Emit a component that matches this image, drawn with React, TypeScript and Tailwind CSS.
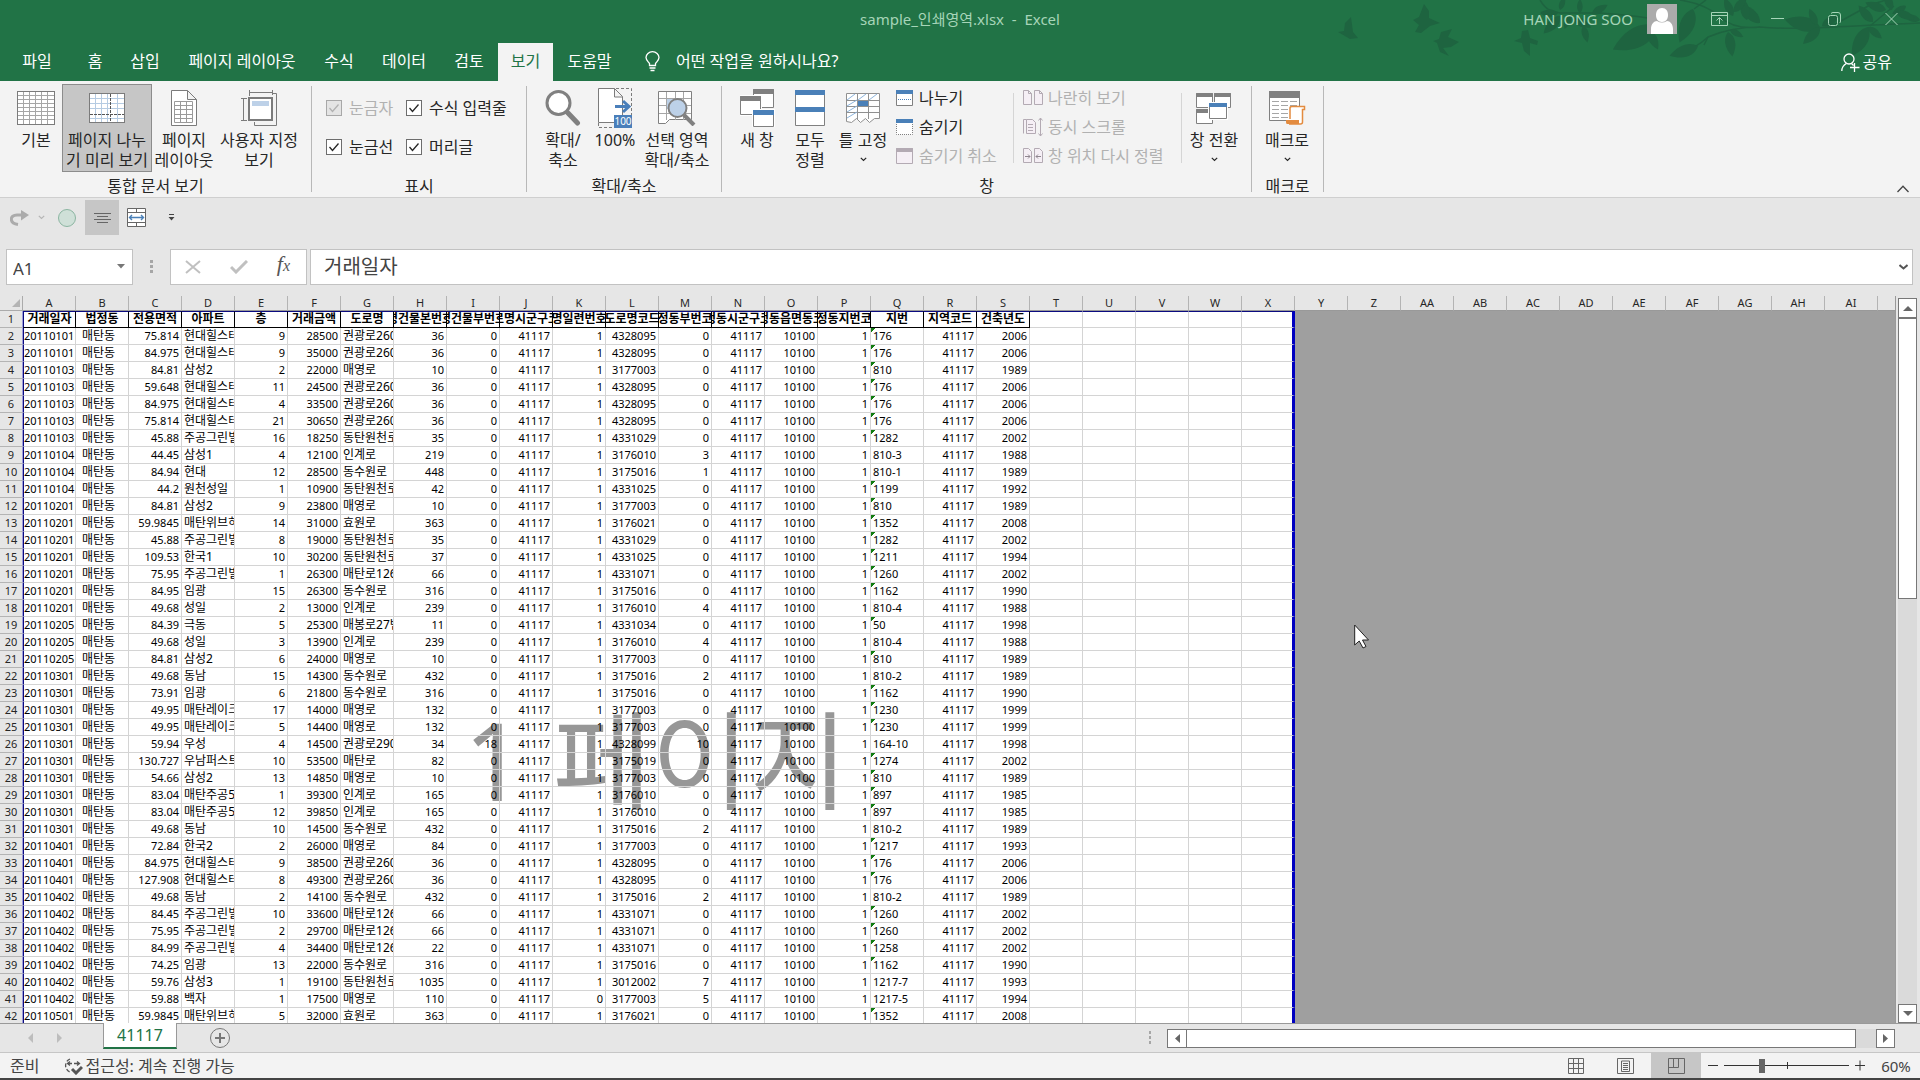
import { useState, type ReactNode } from 'react';
import clsx from 'clsx';

type Row = [string, string, string, number, number, string, number, number, number, number, number, string, number];

const HILL = '현대힐스테이트';
const GREEN = '주공그린빌';
const R260 = '권광로260번길';
const R126 = '매탄로126번길';

// date, area, apartment, floor, price, road, H, I, K, L, M, lot, year
const rows: Row[] = [
  ['20110101', '75.814', HILL, 9, 28500, R260, 36, 0, 1, 4328095, 0, '176', 2006],
  ['20110101', '84.975', HILL, 9, 35000, R260, 36, 0, 1, 4328095, 0, '176', 2006],
  ['20110103', '84.81', '삼성2', 2, 22000, '매영로', 10, 0, 1, 3177003, 0, '810', 1989],
  ['20110103', '59.648', HILL, 11, 24500, R260, 36, 0, 1, 4328095, 0, '176', 2006],
  ['20110103', '84.975', HILL, 4, 33500, R260, 36, 0, 1, 4328095, 0, '176', 2006],
  ['20110103', '75.814', HILL, 21, 30650, R260, 36, 0, 1, 4328095, 0, '176', 2006],
  ['20110103', '45.88', GREEN, 16, 18250, '동탄원천로', 35, 0, 1, 4331029, 0, '1282', 2002],
  ['20110104', '44.45', '삼성1', 4, 12100, '인계로', 219, 0, 1, 3176010, 3, '810-3', 1988],
  ['20110104', '84.94', '현대', 12, 28500, '동수원로', 448, 0, 1, 3175016, 1, '810-1', 1989],
  ['20110104', '44.2', '원천성일', 1, 10900, '동탄원천로', 42, 0, 1, 4331025, 0, '1199', 1992],
  ['20110201', '84.81', '삼성2', 9, 23800, '매영로', 10, 0, 1, 3177003, 0, '810', 1989],
  ['20110201', '59.9845', '매탄위브하늘채', 14, 31000, '효원로', 363, 0, 1, 3176021, 0, '1352', 2008],
  ['20110201', '45.88', GREEN, 8, 19000, '동탄원천로', 35, 0, 1, 4331029, 0, '1282', 2002],
  ['20110201', '109.53', '한국1', 10, 30200, '동탄원천로', 37, 0, 1, 4331025, 0, '1211', 1994],
  ['20110201', '75.95', GREEN, 1, 26300, R126, 66, 0, 1, 4331071, 0, '1260', 2002],
  ['20110201', '84.95', '임광', 15, 26300, '동수원로', 316, 0, 1, 3175016, 0, '1162', 1990],
  ['20110201', '49.68', '성일', 2, 13000, '인계로', 239, 0, 1, 3176010, 4, '810-4', 1988],
  ['20110205', '84.39', '극동', 5, 25300, '매봉로27번길', 11, 0, 1, 4331034, 0, '50', 1998],
  ['20110205', '49.68', '성일', 3, 13900, '인계로', 239, 0, 1, 3176010, 4, '810-4', 1988],
  ['20110205', '84.81', '삼성2', 6, 24000, '매영로', 10, 0, 1, 3177003, 0, '810', 1989],
  ['20110301', '49.68', '동남', 15, 14300, '동수원로', 432, 0, 1, 3175016, 2, '810-2', 1989],
  ['20110301', '73.91', '임광', 6, 21800, '동수원로', 316, 0, 1, 3175016, 0, '1162', 1990],
  ['20110301', '49.95', '매탄레이크파크', 17, 14000, '매영로', 132, 0, 1, 3177003, 0, '1230', 1999],
  ['20110301', '49.95', '매탄레이크파크', 5, 14400, '매영로', 132, 0, 1, 3177003, 0, '1230', 1999],
  ['20110301', '59.94', '우성', 4, 14500, '권광로290번길', 34, 18, 1, 4328099, 10, '164-10', 1998],
  ['20110301', '130.727', '우남퍼스트빌', 10, 53500, '매탄로', 82, 0, 1, 3175019, 0, '1274', 2002],
  ['20110301', '54.66', '삼성2', 13, 14850, '매영로', 10, 0, 1, 3177003, 0, '810', 1989],
  ['20110301', '83.04', '매탄주공5', 1, 39300, '인계로', 165, 0, 1, 3176010, 0, '897', 1985],
  ['20110301', '83.04', '매탄주공5', 12, 39850, '인계로', 165, 0, 1, 3176010, 0, '897', 1985],
  ['20110301', '49.68', '동남', 10, 14500, '동수원로', 432, 0, 1, 3175016, 2, '810-2', 1989],
  ['20110401', '72.84', '한국2', 2, 26000, '매영로', 84, 0, 1, 3177003, 0, '1217', 1993],
  ['20110401', '84.975', HILL, 9, 38500, R260, 36, 0, 1, 4328095, 0, '176', 2006],
  ['20110401', '127.908', HILL, 8, 49300, R260, 36, 0, 1, 4328095, 0, '176', 2006],
  ['20110402', '49.68', '동남', 2, 14100, '동수원로', 432, 0, 1, 3175016, 2, '810-2', 1989],
  ['20110402', '84.45', GREEN, 10, 33600, R126, 66, 0, 1, 4331071, 0, '1260', 2002],
  ['20110402', '75.95', GREEN, 2, 29700, R126, 66, 0, 1, 4331071, 0, '1260', 2002],
  ['20110402', '84.99', GREEN, 4, 34400, R126, 22, 0, 1, 4331071, 0, '1258', 2002],
  ['20110402', '74.25', '임광', 13, 22000, '동수원로', 316, 0, 1, 3175016, 0, '1162', 1990],
  ['20110402', '59.76', '삼성3', 1, 19100, '동탄원천로', 1035, 0, 1, 3012002, 7, '1217-7', 1993],
  ['20110402', '59.88', '백자', 1, 17500, '매영로', 110, 0, 0, 3177003, 5, '1217-5', 1994],
  ['20110501', '59.9845', '매탄위브하늘채', 5, 32000, '효원로', 363, 0, 1, 3176021, 0, '1352', 2008],
];

const fields = [
  '거래일자', '법정동', '전용면적', '아파트', '층', '거래금액', '도로명',
  '도로명건물본번호코드', '도로명건물부번호코드', '도로명시군구코드', '도로명일련번호코드', '도로명코드',
  '법정동부번코드', '법정동시군구코드', '법정동읍면동코드', '법정동지번코드', '지번', '지역코드', '건축년도',
];

const columns = [...'ABCDEFGHIJKLMNOPQRSTUVWXYZ', 'AA', 'AB', 'AC', 'AD', 'AE', 'AF', 'AG', 'AH', 'AI'];
const blankColumns = ['T', 'U', 'V', 'W', 'X'];

const tabs = [
  { name: '파일', width: 'w-[74px]' },
  { name: '홈', width: 'w-[42px]' },
  { name: '삽입', width: 'w-[58px]' },
  { name: '페이지 레이아웃', width: 'w-[136px]' },
  { name: '수식', width: 'w-[58px]' },
  { name: '데이터', width: 'w-[72px]' },
  { name: '검토', width: 'w-[58px]' },
  { name: '보기', width: 'w-[55px]' },
  { name: '도움말', width: 'w-[73px]' },
];

// x, y, length, angle
const leaves = [
  [228, 13, 18, 180], [230, 10, 14, 290], [230, 16, 24, 133], [240, 14, 16, 110], [250, 13, 14, 270],
  [253, 26, 17, 75], [243, 19, 20, 25], [262, 14, 18, 330], [327, 26, 50, 152], [318, 30, 22, 63],
  [363, 9, 36, 112], [368, 46, 30, 161], [398, 32, 25, 80], [400, 30, 15, 28], [430, 23, 26, 225],
  [417, 20, 22, 260], [403, 16, 20, 245], [404, 12, 20, 310], [490, 27, 36, 192], [490, 27, 24, 135],
  [487, 25, 18, 245], [492, 26, 20, 330], [538, 27, 33, 119], [538, 27, 18, 40], [543, 22, 22, 229],
  [556, 10, 22, 200], [562, 10, 20, 250], [576, 6, 16, 150], [590, 20, 18, 195], [566, 12, 20, 20],
];

function Foliage() {
  return (
    <svg className="pointer-events-none absolute right-0 top-0" width="590" height="60" fill="#1e6440" aria-hidden="true">
      <path d="M21 17l2 15 5 6-8 1-12-7 6-1 1-8z" />
      <path d="M94 4l5 7v7l11 5-10 3-9 7-6-1 4-7-6-5 6-3z" />
      <path d="M122 29l-4 8 11 5-8 5-8 1 6 8-9-4-3-9-4-2 6-2 2-7z" />
      <path d="M198 30l2 8 8 3-1 4-7-2v13l-6-5-2-8-8-2 7-3 1-7z" />
      <g fill="none" stroke="#1e6440" strokeWidth="1.500">
        <path d="M210 0c6 10 12 12 20 13h40q28 2 48 5M350 0q26 4 40 17t40 10M352 52q14-4 26-15c14-6 32-10 52-10c40 4 100-2 160-4" />
        <path d="M364 9l12-9M378 37l-4 8M500 27l40-22 16-5M540 26l24-20" />
      </g>
      {leaves.map(([x, y, len, angle], i) => (
        <path key={i} transform={`translate(${x} ${y}) rotate(${angle}) scale(${len / 30})`} d="M0 0C6-8 18-9 30 0C18 8 6 7 0 0z" />
      ))}
    </svg>
  );
}

function Chevron({ className }: { className?: string }) {
  return (
    <svg className={className} width="7" height="5" fill="none" stroke="currentColor" strokeWidth="1.200">
      <path d="M.8.8l2.7 2.7L6.2.8" />
    </svg>
  );
}

/* Ribbon icons */
const NormalIcon = () => (
  <svg width="38" height="34" fill="#fff" stroke="#7b7b7b">
    <rect x=".5" y=".5" width="37" height="33" />
    <path stroke="#a6a6a6" d="M6.500 1v32M12.500 1v32M18.500 1v32M24.500 1v32M30.500 1v32M1 4.500h36M1 8.500h36M1 12.500h36M1 16.500h36M1 20.500h36M1 24.500h36M1 28.500h36" />
  </svg>
);

const BreakIcon = () => (
  <svg width="36" height="30" fill="#fff" stroke="#7b7b7b">
    <rect x=".5" y=".5" width="35" height="29" />
    <path stroke="#b5cbe2" d="M6.500 1v28M12.500 1v28M18.500 1v28M28.500 1v28M1 5.500h34M1 10.500h34M1 15.500h34M1 25.500h34" />
    <path stroke="#555" strokeDasharray="3 1" d="M21.500 1v28M1 21.500h34" />
  </svg>
);

const LayoutIcon = () => (
  <svg width="26" height="36" fill="#fff" stroke="#7b7b7b">
    <path d="M.5.500h16l9 9v26H.500zM16.500.500v9h9" />
    <path stroke="#9a9a9a" d="M3.500 11.500h18v21h-18zM3.500 15.500h18M3.500 19.500h18M3.500 24.500h18M3.500 28.500h18M9.500 11.500v21M15.500 11.500v21" />
  </svg>
);

const CustomViewIcon = () => (
  <svg width="37" height="36" fill="none" stroke="#7b7b7b">
    <path d="M8.500 0v6M31.500 0v5M8 2.500h24M0 8.500h6M0 30.500h6M2.500 8v22M32 3.500h3.500v32h-22V32" />
    <rect x="8" y="8" width="23" height="22" fill="#fff" strokeWidth="2" />
    <path fill="#bdd1e8" stroke="none" d="M11 11h17v5H11z" />
  </svg>
);

const ZoomIcon = () => (
  <svg width="36" height="36" fill="#fff" stroke="#808080">
    <circle cx="13.500" cy="13" r="11.500" strokeWidth="3" />
    <path strokeWidth="5" strokeLinecap="round" d="M23 23l9.500 10" />
  </svg>
);

const HundredIcon = () => (
  <svg width="34" height="40" fill="none" stroke="#7b7b7b">
    <path strokeDasharray="3 2" d="M18 .5h15.500V39M.5 35v4.500H16" />
    <path fill="#fff" d="M.5.500h16l8 8v26H.500zM16.500.500v8.500h8" />
    <path stroke="#4a7fba" strokeWidth="3" d="M17 18.500h13M25 13l6 5.500-6 5.500" />
    <path fill="#4a7fba" stroke="none" d="M16 27h18v13H16z" />
    <text x="25" y="37" fill="#fff" stroke="none" fontSize="10" fontFamily="Noto Sans" textAnchor="middle">100</text>
  </svg>
);

const ZoomSelectionIcon = () => (
  <svg width="38" height="35" fill="#fff" stroke="#808080">
    <path d="M.5.500h33v28h-22l-4 4H.500z" />
    <path fill="none" stroke="#a6a6a6" d="M8.500 1v28M17.500 1v28M25.500 1v28M1 7.500h32M1 14.500h32M1 22.500h32" />
    <path fill="#bdd1e8" stroke="none" d="M9 8h10v10H9z" />
    <circle cx="19.500" cy="17" r="9" fill="#bdd1e8" strokeWidth="2" />
    <path strokeWidth="4" d="M26 24l10 10" />
  </svg>
);

const NewWindowIcon = () => (
  <svg width="35" height="38" fill="#fff" stroke="#808080">
    <path d="M13.500.500h20v18h-20z" />
    <path stroke="#fff" strokeWidth="3" d="M.5 7.500h20v18H.500z" />
    <path d="M.5 7.500h20v18H.500z" />
    <path fill="#808080" d="M13.500.500h20v4h-20zM.5 7.500h20v4H.500z" />
    <path stroke="#fff" strokeWidth="3" d="M13.500 21.500h20v16h-20z" />
    <path d="M13.500 21.500h20v16h-20z" />
    <path fill="#4a80b8" stroke="none" d="M13 21h21v5H13z" />
  </svg>
);

const ArrangeIcon = () => (
  <svg width="30" height="36" fill="#fff" stroke="#808080">
    <path d="M.5.500h29v35H.500z" />
    <path fill="#4a80b8" stroke="none" d="M0 0h30v5H0zM0 17h30v5H0z" />
  </svg>
);

const FreezeIcon = () => (
  <svg width="35" height="30" fill="#fff" stroke="#909090">
    <path d="M.5.500h33v25h-5l-5 4-4-4-5 4-4-4-5 4-5-1z" />
    <path fill="none" d="M11.500 1v25M22.500 1v25M1 7.500h33M1 13.500h33M1 19.500h33" />
    <path fill="none" stroke="#8db4dc" d="M1 7l8-6M12 7l8-6M23 7l8-6M1 13l10-6M1 19l10-6M1 25l10-6" />
    <path fill="#4a80b8" stroke="none" d="M12 8h10v5H12z" />
  </svg>
);

const SwitchIcon = () => (
  <svg width="36" height="31" fill="#fff" stroke="#808080">
    <path d="M.5.500h16v14H.500zM18.500.500h16v14h-16zM.5 16.500h16v14H.500z" />
    <path fill="#808080" d="M.5.500h16v3H.500zM18.500.500h16v3h-16zM.5 16.500h16v3H.500z" />
    <path stroke="#fff" strokeWidth="3" d="M13.500 10.500h17v15h-17z" />
    <path d="M13.500 10.500h17v15h-17z" />
    <path fill="#4a80b8" stroke="none" d="M13 10h18v4H13z" />
  </svg>
);

const MacroIcon = () => (
  <svg width="37" height="34" fill="#fff" stroke="#808080">
    <path d="M.5.500h30v29H.500z" />
    <path fill="#808080" stroke="none" d="M0 0h31v7H0z" />
    <path stroke="#a6a6a6" strokeDasharray="7 2" d="M3 10.500h26M3 14.500h26M3 18.500h16M3 22.500h16M3 26.500h16" />
    <path stroke="#e38b3f" strokeWidth="1.500" d="M21 28V17q0-1.500 2-1.500h12.500v3h-2V31q0 2-2 2H20" />
    <path fill="#e38b3f" stroke="none" d="M17 29h13v4H18q-1 0-1-2z" />
  </svg>
);

const SplitIcon = () => (
  <svg width="17" height="16" fill="#fff" stroke="#808080">
    <path d="M.5.500h16v15H.500z" />
    <path fill="#4a80b8" stroke="none" d="M0 0h17v4H0z" />
    <path strokeDasharray="1 1" stroke="#4a80b8" d="M2 9.500h13" />
  </svg>
);

const HideIcon = () => (
  <svg width="17" height="16" fill="#fff" stroke="#808080">
    <path strokeDasharray="1 1" d="M.5 3v12.500h16V3" />
    <path fill="#4a80b8" stroke="none" d="M0 0h17v4H0z" />
  </svg>
);

const UnhideIcon = () => (
  <svg width="17" height="16" fill="#f5eff5" stroke="#b3aab3">
    <path d="M.5.500h16v15H.500z" />
    <path fill="#b3aab3" d="M.5.500h16v3H.500z" />
  </svg>
);

const SideBySideIcon = () => (
  <svg width="20" height="15" fill="#f5eff5" stroke="#b3aab3">
    <path d="M.5.500h5l3 3v11h-8zM11.500.500h5l3 3v11h-8zM5.500.500v3h3M16.500.500v3h3" />
  </svg>
);

const SyncIcon = () => (
  <svg width="20" height="20" fill="#f5eff5" stroke="#b3aab3">
    <path d="M.5 16.500v-14h3M3.500 2.500h6l3 3v11h-9zM5 7.500h5M5 10.500h5M5 13.500h5" />
    <path fill="none" d="M17.500 1v18M15.500 3.500l2-2.500 2 2.500M15.500 16.500l2 2.500 2-2.500" />
  </svg>
);

const ResetIcon = () => (
  <svg width="20" height="15" fill="#f5eff5" stroke="#b3aab3">
    <path d="M.5.500h5l3 3v11h-8zM11.500.500h5l3 3v11h-8z" />
    <path fill="none" stroke="#8f868f" d="M2 8.500h5M5 6.500l2 2-2 2M18 8.500h-5M15 6.500l-2 2 2 2" />
  </svg>
);

interface BigButtonProps {
  icon: ReactNode;
  lines: string[];
  width: string;
  active?: boolean;
  menu?: boolean;
}

function BigButton({ icon, lines, width, active, menu }: BigButtonProps) {
  return (
    <button
      className={clsx(
        'flex h-[88px] shrink-0 flex-col items-center whitespace-nowrap border pt-[3px] leading-5',
        width,
        active ? 'border-[#8c8c8c] bg-[#c6c6c6]' : 'border-transparent',
      )}
    >
      <span className="mb-0.5 flex h-10 items-center">{icon}</span>
      {lines.map((line) => (
        <span key={line}>{line}</span>
      ))}
      {menu && <Chevron className="mt-[7px]" />}
    </button>
  );
}

function SmallButton({ icon, label, disabled }: { icon: ReactNode; label: string; disabled?: boolean }) {
  return (
    <button disabled={disabled} className="flex h-[29px] items-center whitespace-nowrap pb-[2px] disabled:text-[#b1b1b1]">
      <span className="mr-[5px] flex min-w-[18px]">{icon}</span>
      {label}
    </button>
  );
}

function CheckOption({ label, disabled }: { label: string; disabled?: boolean }) {
  return (
    <label className={clsx('flex items-center gap-[7px] whitespace-nowrap', disabled && 'text-[#b1b1b1]')}>
      <span className="grid">
        <input
          type="checkbox"
          defaultChecked
          disabled={disabled}
          className="peer col-start-1 row-start-1 size-4 appearance-none border border-[#6d6d6d] bg-white disabled:border-[#a8a8a8] disabled:bg-[#e4e4e4]"
        />
        <svg className="pointer-events-none invisible col-start-1 row-start-1 peer-checked:visible" width="16" height="16" fill="none" stroke="currentColor" strokeWidth="1.300">
          <path d="M3.500 8l3 3.500L12.500 4.500" />
        </svg>
      </span>
      {label}
    </label>
  );
}

interface GroupProps {
  title: string;
  width: string;
  pad?: string;
  children: ReactNode;
}

function Group({ title, width, pad, children }: GroupProps) {
  return (
    <>
      <section className={clsx('flex shrink-0 flex-col pt-[3px]', width)}>
        <div className={clsx('flex h-[88px]', pad)}>{children}</div>
        <h2 className="mt-1 text-center leading-5">{title}</h2>
      </section>
      <div className="mt-[5px] h-[106px] w-px shrink-0 bg-[#b8b8b8]" />
    </>
  );
}

function TitleBar() {
  return (
    <header className="relative bg-[#217346] text-white">
      <Foliage />
      <div className="relative flex h-[43px] items-start justify-end text-[15px] text-[#a6d5b8]">
        <h1 className="absolute inset-x-0 top-[9px] text-center leading-5">sample_인쇄영역.xlsx&nbsp; -&nbsp; Excel</h1>
        <span className="mt-[9px] leading-5">HAN JONG SOO</span>
        <button aria-label="계정" className="ml-3.5 mt-1">
          <svg width="30" height="30">
            <path fill="#ababab" d="M0 0h30v30H0z" />
            <path fill="#fff" d="M15 4c4 0 6 3 6 7s-2 7-6 7-6-3-6-7 2-7 6-7zM4 30V25c0-5 3-8 6-8q5 3 10 0c3 0 6 3 6 8v5z" />
          </svg>
        </button>
        <button aria-label="리본 메뉴 표시 옵션" className="ml-[34px] mt-[12px]">
          <svg width="17" height="14" fill="none" stroke="currentColor">
            <path d="M.5.500h16v13H.500zM.5 3.500h16M8.500 12V6M5.500 8.500l3-3 3 3" />
          </svg>
        </button>
        <button aria-label="최소화" className="ml-[43px] mt-[12px]">
          <svg width="13" height="14" stroke="currentColor"><path d="M0 6.500h13" /></svg>
        </button>
        <button aria-label="이전 크기로 복원" className="ml-[44px] mt-[12px]">
          <svg width="13" height="14" fill="none" stroke="currentColor">
            <rect x=".5" y="3.500" width="9" height="10" rx="2" />
            <path d="M3 1.500q1-1 2-1h5q2.500 0 2.500 2.500v6q0 1.500-1 2" />
          </svg>
        </button>
        <button aria-label="닫기" className="ml-[44px] mr-[22px] mt-[12px]">
          <svg width="13" height="14" stroke="currentColor"><path d="M.5 1l12 12M12.500 1l-12 12" /></svg>
        </button>
      </div>
      <nav className="relative flex h-[38px] items-stretch">
        {tabs.map((tab) => (
          <button
            key={tab.name}
            className={clsx('shrink-0 whitespace-nowrap pb-[2px]', tab.width, tab.name === '보기' && 'bg-[#f3f3f3] text-[#217346]')}
          >
            {tab.name}
          </button>
        ))}
        <button className="ml-[19px] flex items-center whitespace-nowrap pb-[2px]">
          <svg className="mr-4" width="15" height="21" fill="none" stroke="currentColor" strokeWidth="1.300">
            <path d="M4.500 14.500v-2C3 10.500 1 9 1 6.500a6.500 5.800 0 0113 0C14 9 12 10.500 10.500 12.500v2zM4.500 17h6M5.500 19.500h4" />
          </svg>
          어떤 작업을 원하시나요?
        </button>
        <button className="ml-auto mr-[28px] flex items-center">
          <svg className="mr-[3px]" width="19" height="19" fill="none" stroke="currentColor" strokeWidth="1.300">
            <circle cx="8" cy="6" r="5" />
            <path d="M.8 18c0-4 2-6 4.500-7.500M10.500 10.500l2 2M13.500 10v9M9 14.500h9.500" />
          </svg>
          공유
        </button>
      </nav>
    </header>
  );
}

function Ribbon() {
  return (
    <div className="flex h-[117px] border-b border-[#cfcfcf] bg-[#f3f3f3] text-[#262626]">
      <Group title="통합 문서 보기" width="w-[311px]" pad="pl-[10px]">
        <BigButton icon={<NormalIcon />} lines={['기본']} width="w-[52px]" />
        <BigButton icon={<BreakIcon />} lines={['페이지 나누', '기 미리 보기']} width="w-[90px]" active />
        <BigButton icon={<LayoutIcon />} lines={['페이지', '레이아웃']} width="w-[64px]" />
        <BigButton icon={<CustomViewIcon />} lines={['사용자 지정', '보기']} width="w-[86px]" />
      </Group>
      <Group title="표시" width="w-[214px]">
        <div className="grid grid-cols-[80px_auto] grid-rows-[39px_39px] pl-[14px] pt-1">
          <CheckOption label="눈금자" disabled />
          <CheckOption label="수식 입력줄" />
          <CheckOption label="눈금선" />
          <CheckOption label="머리글" />
        </div>
      </Group>
      <Group title="확대/축소" width="w-[194px]" pad="pl-[11px]">
        <BigButton icon={<ZoomIcon />} lines={['확대/', '축소']} width="w-[50px]" />
        <BigButton icon={<HundredIcon />} lines={['100%']} width="w-[54px]" />
        <BigButton icon={<ZoomSelectionIcon />} lines={['선택 영역', '확대/축소']} width="w-[70px]" />
      </Group>
      <Group title="창" width="w-[529px]" pad="pl-[9px]">
        <BigButton icon={<NewWindowIcon />} lines={['새 창']} width="w-[52px]" />
        <BigButton icon={<ArrangeIcon />} lines={['모두', '정렬']} width="w-[54px]" />
        <BigButton icon={<FreezeIcon />} lines={['틀 고정']} width="w-[52px]" menu />
        <div className="ml-[7px] w-[117px]">
          <SmallButton icon={<SplitIcon />} label="나누기" />
          <SmallButton icon={<HideIcon />} label="숨기기" />
          <SmallButton icon={<UnhideIcon />} label="숨기기 취소" disabled />
        </div>
        <div className="my-[9px] w-px bg-[#d5d5d5]" />
        <div className="w-[167px] pl-[9px]">
          <SmallButton icon={<SideBySideIcon />} label="나란히 보기" disabled />
          <SmallButton icon={<SyncIcon />} label="동시 스크롤" disabled />
          <SmallButton icon={<ResetIcon />} label="창 위치 다시 정렬" disabled />
        </div>
        <div className="my-[9px] w-px bg-[#d5d5d5]" />
        <BigButton icon={<SwitchIcon />} lines={['창 전환']} width="w-[64px]" menu />
      </Group>
      <Group title="매크로" width="w-[71px]" pad="pl-[3px]">
        <BigButton icon={<MacroIcon />} lines={['매크로']} width="w-[64px]" menu />
      </Group>
      <button aria-label="리본 메뉴 축소" className="ml-auto mr-[11px] self-end pb-1">
        <svg width="12" height="8" fill="none" stroke="#444" strokeWidth="1.300"><path d="M.5 7L6 1.200 11.500 7" /></svg>
      </button>
    </div>
  );
}

function QuickAccess() {
  return (
    <div className="flex h-[39px] items-center pl-[10px]">
      <button aria-label="다시 실행">
        <svg width="19" height="16" fill="none" stroke="#ababab" strokeWidth="3">
          <path d="M8 14.500C-1 13-.5 5 7 5h8" />
          <path fill="#ababab" stroke="none" d="M11 0l8 5-8 5.500z" />
        </svg>
      </button>
      <Chevron className="ml-[9px] text-[#b5b5b5]" />
      <button aria-label="녹음" className="ml-[13px] size-[18px] rounded-full border border-[#8bb5a1] bg-[#cfe0d8]" />
      <button aria-label="가운데 맞춤" className="ml-[9px] flex h-[35px] w-[34px] items-center justify-center bg-[#c6c6c6]">
        <svg width="17" height="12" stroke="#666"><path d="M0 1.500h17M3 4.500h11M0 7.500h17M3 10.500h11" /></svg>
      </button>
      <button aria-label="병합하고 가운데 맞춤" className="ml-2">
        <svg width="19" height="19" fill="#fff" stroke="#666">
          <path d="M.5.500h18v18H.500zM.5 4.500h18M.5 14.500h18M9.500.500v4M9.500 14.500v4" />
          <path fill="none" stroke="#4a80b8" strokeWidth="1.400" d="M2.500 9.500h14M5 7L2.500 9.500 5 12M14 7l2.500 2.500L14 12" />
        </svg>
      </button>
      <button aria-label="빠른 실행 도구 모음 사용자 지정" className="ml-[22px]">
        <svg width="7" height="7" fill="#444"><path d="M1 0h5v1H1zM.5 3h6l-3 3.500z" /></svg>
      </button>
    </div>
  );
}

function FormulaBar() {
  return (
    <div className="flex items-stretch pb-[11px] pl-1.5 pr-[7px] pt-3">
      <div className="flex h-9 w-[127px] items-center border border-[#c2c2c2] bg-white">
        <input aria-label="이름 상자" defaultValue="A1" className="w-[110px] pl-1.5 pt-[3px] text-[17px] text-[#444] outline-none" />
        <button aria-label="이름 목록" className="pb-[2px]"><svg width="8" height="5" fill="#777"><path d="M0 0h8L4 4.500z" /></svg></button>
      </div>
      <svg className="mx-[17px] self-center" width="3" height="14" fill="#a6a6a6"><path d="M0 0h3v3H0zM0 5h3v3H0zM0 10h3v3H0z" /></svg>
      <div className="flex h-9 w-[137px] items-center justify-between border border-[#c2c2c2] bg-white pl-3.5 pr-4">
        <button aria-label="취소"><svg width="16" height="14" stroke="#c0c0c0" strokeWidth="2"><path d="M1 1l14 12M15 1L1 13" /></svg></button>
        <button aria-label="입력"><svg width="18" height="14" fill="none" stroke="#c0c0c0" strokeWidth="3"><path d="M1 7l5 5L17 1" /></svg></button>
        <button aria-label="함수 삽입" className="pb-1 font-['Liberation_Serif',serif] text-[22px] italic leading-6 text-[#555]">
          f<span className="text-base">x</span>
        </button>
      </div>
      <div className="ml-[3px] flex h-9 flex-1 items-center border border-[#c2c2c2] bg-white pr-1">
        <input aria-label="수식 입력줄" defaultValue="거래일자" className="min-w-0 flex-1 pb-px pl-[13px] text-xl leading-6 text-[#444] outline-none" />
        <button aria-label="수식 입력줄 확장" className="pb-px"><svg width="9" height="6" fill="none" stroke="#555" strokeWidth="2"><path d="M.5 1l4 3.500 4-3.500" /></svg></button>
      </div>
    </div>
  );
}

const cell = 'h-[17px] overflow-hidden whitespace-nowrap border-b border-r border-[#d4d4d4] p-0 leading-4';
const numCell = clsx(cell, 'pr-[2px] text-right');
const textCell = clsx(cell, 'pl-[2px] text-xs leading-4');

function RowNumber({ n }: { n: number }) {
  return <th className="h-[17px] border-b border-r border-b-[#b4b4b4] border-r-[#9d9dd8] bg-[#e6e6e6] p-0 font-normal leading-4 text-[#262626]">{n}</th>;
}

function DataRow({ row, n }: { row: Row; n: number }) {
  const [date, area, apt, floor, price, road, h, i, k, l, m, lot, year] = row;
  return (
    <tr>
      <RowNumber n={n} />
      <td className={clsx(numCell, 'border-l border-l-[#0b0b80]')}>{date}</td>
      <td className={clsx(cell, 'pl-[6px] text-xs leading-4')}>매탄동</td>
      <td className={numCell}>{area}</td>
      <td className={textCell}>{apt}</td>
      <td className={numCell}>{floor}</td>
      <td className={numCell}>{price}</td>
      <td className={textCell}>{road}</td>
      <td className={numCell}>{h}</td>
      <td className={numCell}>{i}</td>
      <td className={numCell}>41117</td>
      <td className={numCell}>{k}</td>
      <td className={numCell}>{l}</td>
      <td className={numCell}>{m}</td>
      <td className={numCell}>41117</td>
      <td className={numCell}>10100</td>
      <td className={numCell}>1</td>
      <td className={clsx(cell, 'pl-[2px]', !lot.includes('-') && 'bg-[linear-gradient(135deg,#107c10_3px,transparent_3px)]')}>{lot}</td>
      <td className={numCell}>41117</td>
      <td className={numCell}>{year}</td>
      {blankColumns.map((c) => (
        <td key={c} className={clsx(cell, c === 'X' && 'border-r-[3px] border-r-[#0000c0]')} />
      ))}
    </tr>
  );
}

function Sheet() {
  return (
    <div className="relative min-w-0 flex-1 overflow-hidden border-r border-[#999] bg-white">
      <div className="absolute inset-y-0 left-[23px] flex w-[1266px] items-center justify-center pt-[200px] text-[107px] leading-none text-[#979797]">
        1 페이지
      </div>
      <table className="relative w-full table-fixed border-separate border-spacing-0 text-[11px] text-black">
        <colgroup>
          <col className="w-[23px]" />
          {columns.map((c) => (
            <col key={c} className="w-[53px]" />
          ))}
          <col />
        </colgroup>
        <thead className="bg-[#e6e6e6] text-[#262626]">
          <tr>
            <th className="h-[15px] border-b border-r border-[#ababab] p-0">
              <svg className="ml-3" width="8" height="8" fill="#b4b4b4"><path d="M8 0v8H0z" /></svg>
            </th>
            {columns.map((c) => (
              <th key={c} className="h-[15px] border-b border-r border-b-[#999] border-r-[#b4b4b4] p-0 font-normal leading-[14px]">{c}</th>
            ))}
            <th className="border-b border-[#999] p-0" />
          </tr>
        </thead>
        <tbody>
          <tr>
            <RowNumber n={1} />
            {fields.map((f, i) => (
              <td
                key={f}
                className={clsx(
                  'h-[17px] overflow-hidden border-b border-r border-t border-b-black border-r-black border-t-[#0b0b80] p-0 text-xs font-bold leading-[14px]',
                  i === 0 && 'border-l border-l-[#0b0b80]',
                )}
              >
                <div className="flex h-[15px] justify-center overflow-hidden whitespace-nowrap"><span>{f}</span></div>
              </td>
            ))}
            {blankColumns.map((c) => (
              <td key={c} className={clsx(cell, 'border-t border-t-[#0b0b80]', c === 'X' && 'border-r-[3px] border-r-[#0000c0]')} />
            ))}
            <td rowSpan={rows.length + 1} colSpan={12} className="bg-[#9f9f9f] p-0" />
          </tr>
          {rows.map((row, i) => (
            <DataRow key={i} row={row} n={i + 2} />
          ))}
        </tbody>
      </table>
    </div>
  );
}

const scrollButton = 'flex items-center justify-center border border-[#777] bg-white';

function VerticalScroll() {
  return (
    <div className="flex w-6 flex-col pl-[2px] pr-[3px] pt-[2px]">
      <button aria-label="위로" className={clsx(scrollButton, 'h-5')}>
        <svg width="10" height="5" fill="#666"><path d="M5 0l5 5H0z" /></svg>
      </button>
      <div className="min-h-0 flex-1 bg-[#dadada]">
        <div className="h-[41%] border border-[#777] bg-white" />
      </div>
      <button aria-label="아래로" className={clsx(scrollButton, 'h-[19px]')}>
        <svg width="10" height="5" fill="#666"><path d="M0 0h10L5 5z" /></svg>
      </button>
    </div>
  );
}

function SheetBar() {
  return (
    <div className="flex h-[30px] border-b border-t border-b-[#c6c6c6] border-t-[#999] pr-[25px]">
      <button aria-label="이전 시트" className="ml-7"><svg width="5" height="10" fill="#bdbdbd"><path d="M5 0v10L0 5z" /></svg></button>
      <button aria-label="다음 시트" className="ml-6"><svg width="5" height="10" fill="#bdbdbd"><path d="M0 0v10l5-5z" /></svg></button>
      <button className="relative -mt-px ml-[41px] h-[26px] w-[74px] border-x border-b-2 border-x-[#999] border-b-[#217346] bg-white text-base leading-6 text-[#217346]">
        41117
      </button>
      <button aria-label="새 시트" className="ml-[33px]">
        <svg width="20" height="20" fill="none" stroke="#777">
          <circle cx="10" cy="10" r="9.500" />
          <path strokeWidth="2" d="M10 5v10M5 10h10" />
        </svg>
      </button>
      <svg className="ml-auto mr-4 self-center" width="2" height="14" fill="#a6a6a6"><path d="M0 0h2v3H0zM0 5h2v3H0zM0 10h2v3H0z" /></svg>
      <div className="flex h-[19px] w-[728px] self-center bg-[#dadada]">
        <button aria-label="왼쪽으로" className={clsx(scrollButton, 'w-5')}>
          <svg width="5" height="9" fill="#666"><path d="M5 0v9L0 4.500z" /></svg>
        </button>
        <div className="flex-1 pr-5">
          <div className="-ml-px h-full border border-[#777] bg-white" />
        </div>
        <button aria-label="오른쪽으로" className={clsx(scrollButton, 'w-[19px]')}>
          <svg width="5" height="9" fill="#666"><path d="M0 0v9l5-4.500z" /></svg>
        </button>
      </div>
    </div>
  );
}

function StatusBar() {
  const [zoom, setZoom] = useState(29);

  return (
    <footer className="flex h-[27px] items-center whitespace-nowrap border-b-2 border-[#444] bg-[#f3f3f3] pl-[10px] pr-2 text-[#444]">
      <span>준비</span>
      <button className="ml-6 flex items-center">
        <svg className="mr-[2px]" width="20" height="18" fill="none" stroke="#555" strokeWidth="1.300">
          <path strokeDasharray="4 2" d="M7 2a7 7 0 000 13" />
          <path d="M5 6.500h4M7 4.500l-2.500 2L7 8.500M11 6.500h5M14 4.500l2.500 2-2.500 2" />
          <path strokeWidth="3" d="M9 12l4 4 6-6" />
        </svg>
        접근성: 계속 진행 가능
      </button>
      <button aria-label="기본" className="ml-auto mr-[33px]">
        <svg width="16" height="16" fill="none" stroke="#666"><path d="M.5.500h15v15H.500zM5.500.500v15M10.500.500v15M.5 5.500h15M.5 10.500h15" /></svg>
      </button>
      <button aria-label="페이지 레이아웃" className="mr-[17px]">
        <svg width="17" height="16" fill="none" stroke="#666"><path d="M.5.500h16v15H.500zM4.500 3h8v10.500h-8zM6 5.500h5M6 7.500h5M6 9.500h5M6 11.500h5" /></svg>
      </button>
      <button aria-label="페이지 나누기 미리 보기" className="flex h-full w-[50px] items-center justify-center bg-[#c6c6c6]">
        <svg width="17" height="16" fill="none" stroke="#666"><path d="M.5.500h16v15H.500zM5.500.500v9M10.500.500v9M.5 9.500h10" /></svg>
      </button>
      <button aria-label="축소" className="ml-[7px]"><svg width="10" height="11" stroke="#333"><path d="M0 5.500h10" /></svg></button>
      <div className="relative ml-1.5 flex w-[125px] items-center">
        <span className="absolute left-1/2 h-[7px] w-px bg-[#333]" />
        <input
          type="range"
          aria-label="확대/축소"
          value={zoom}
          onChange={(e) => setZoom(Number(e.target.value))}
          className="relative h-4 w-full appearance-none bg-transparent [&::-webkit-slider-runnable-track]:h-px [&::-webkit-slider-runnable-track]:bg-[#333] [&::-webkit-slider-thumb]:-mt-[6px] [&::-webkit-slider-thumb]:h-[14px] [&::-webkit-slider-thumb]:w-1.5 [&::-webkit-slider-thumb]:appearance-none [&::-webkit-slider-thumb]:bg-[#666]"
        />
      </div>
      <button aria-label="확대" className="ml-1.5"><svg width="10" height="11" stroke="#333"><path d="M0 5.500h10M5 .5v10" /></svg></button>
      <button className="ml-[15px] w-8 text-[15px]">60%</button>
    </footer>
  );
}

export default function App() {
  return (
    <div className="relative flex h-screen flex-col overflow-hidden bg-[#e6e6e6] font-['Noto_Sans','Noto_Sans_CJK_KR',sans-serif] text-base leading-5">
      <TitleBar />
      <Ribbon />
      <QuickAccess />
      <FormulaBar />
      <main className="flex min-h-0 flex-1">
        <Sheet />
        <VerticalScroll />
      </main>
      <SheetBar />
      <StatusBar />
      {/* mouse pointer */}
      <svg className="pointer-events-none absolute left-[1354px] top-[624px]" width="16" height="25" fill="#fff" stroke="#222">
        <path d="M.7 1v20l4.500-4 3.800 7 3-1.500-3.500-6.500h6z" />
      </svg>
    </div>
  );
}
